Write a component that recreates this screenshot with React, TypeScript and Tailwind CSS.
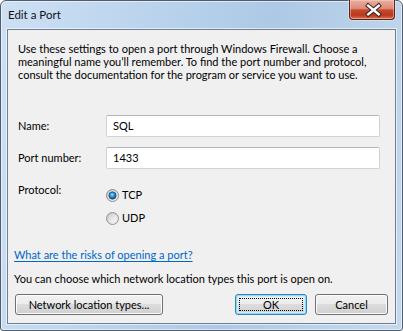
import React from "react";

function RadioOn() {
  return (
    <svg width="13" height="13" viewBox="0 0 13 13">
      <defs>
        <linearGradient id="rOnBg" x1="0" y1="0" x2="1" y2="1">
          <stop offset="0" stopColor="#c9c9c9" />
          <stop offset="1" stopColor="#f8f8f8" />
        </linearGradient>
        <radialGradient id="rOnDot" cx="0.45" cy="0.4" r="0.65">
          <stop offset="0" stopColor="#a6e4ff" />
          <stop offset="0.45" stopColor="#2b8fd6" />
          <stop offset="1" stopColor="#0c3a66" />
        </radialGradient>
      </defs>
      <circle cx="6.5" cy="6.5" r="6" fill="url(#rOnBg)" stroke="#8b8b8b" strokeWidth="1" />
      <circle cx="6.5" cy="6.5" r="3.7" fill="url(#rOnDot)" stroke="#1d4f7c" strokeWidth="0.6" />
    </svg>
  );
}

function RadioOff() {
  return (
    <svg width="13" height="13" viewBox="0 0 13 13">
      <defs>
        <linearGradient id="rOffBg" x1="0" y1="0" x2="1" y2="1">
          <stop offset="0" stopColor="#c4c4c4" />
          <stop offset="1" stopColor="#f6f6f6" />
        </linearGradient>
        <linearGradient id="rOffIn" x1="0" y1="0" x2="1" y2="1">
          <stop offset="0" stopColor="#d2d2d2" />
          <stop offset="1" stopColor="#fafafa" />
        </linearGradient>
      </defs>
      <circle cx="6.5" cy="6.5" r="6" fill="url(#rOffBg)" stroke="#929292" strokeWidth="1" />
      <circle cx="6.5" cy="6.5" r="4" fill="url(#rOffIn)" />
    </svg>
  );
}

function Btn({ children, w, def }: { children: React.ReactNode; w: string; def?: boolean }) {
  return (
    <div
      className={
        "relative flex h-[21px] items-center justify-center rounded-[3px] border bg-[linear-gradient(to_bottom,#f2f2f2_0%,#ebebeb_50%,#dddddd_50%,#cfcfcf_100%)] text-[11px] leading-[14px] text-black " +
        w +
        (def
          ? " border-[#3c7fb1] shadow-[inset_0_0_0_1px_#8fdcf8,inset_0_0_0_2px_#c8eefc]"
          : " border-[#707070] shadow-[inset_0_0_0_1px_#fcfcfc]")
      }
    >
      {def && <div className="pointer-events-none absolute inset-[3px] border border-dotted border-black" />}
      <span className="relative">{children}</span>
    </div>
  );
}

export default function App() {
  return (
    <div className="h-[331px] w-[403px] overflow-hidden bg-white font-['Lato','Open_Sans',sans-serif] text-[11px] text-black">
      <div className="flex h-full w-full flex-col rounded-t-[6px] rounded-b-[3px] border border-[#4f5d6e] bg-[linear-gradient(100deg,#cde0f5_0%,#b9d3ec_35%,#adc9e5_60%,#bcd3ea_85%,#c5d9ee_100%)] shadow-[inset_0_0_0_1px_rgba(255,255,255,0.55)]">
        {/* title bar */}
        <div className="flex h-[28px] shrink-0 items-start justify-between">
          <div className="pl-[7px] pt-[6px] text-[11.5px] leading-[16px] text-[#111]">Edit a Port</div>
          <div className="-mt-px mr-[7px] flex h-[20px] w-[46px] items-center justify-center rounded-b-[4px] border border-t-0 border-[#5a2318] bg-[linear-gradient(to_bottom,#eab0a2_0%,#dc8a76_45%,#c84a30_52%,#b9381e_80%,#d9744f_100%)] shadow-[inset_0_0_0_1px_rgba(255,220,210,0.45),0_0_0_1px_rgba(255,255,255,0.35)]">
            <svg width="46" height="20" viewBox="0 0 46 20">
              <path d="M19 5.5 L30 14.5 M30 5.5 L19 14.5" stroke="#3a2320" strokeWidth="4.6" strokeLinecap="square" />
              <path d="M19 5.5 L30 14.5 M30 5.5 L19 14.5" stroke="#ffffff" strokeWidth="2.6" strokeLinecap="square" />
            </svg>
          </div>
        </div>

        {/* content */}
        <div className="mx-[6px] mb-[6px] flex min-h-0 flex-1 flex-col border border-[#6f7e90] bg-[#f0f0f0] shadow-[0_0_0_1px_rgba(255,255,255,0.6)]">
          <p className="mt-[12px] whitespace-nowrap pl-[10px] leading-[13px]">
            Use these settings to open a port through Windows Firewall. Choose a
            <br />
            meaningful name you’ll remember. To find the port number and protocol,
            <br />
            consult the documentation for the program or service you want to use.
          </p>

          <div className="mt-[34px] flex items-center">
            <div className="w-[98px] pl-[10px]">Name:</div>
            <div className="flex h-[22px] w-[274px] items-center rounded-[2px] border border-[#cfd3da] border-t-[#b3b7bf] bg-white pl-[6px]">
              SQL
            </div>
          </div>

          <div className="mt-[10px] flex items-center">
            <div className="w-[98px] pl-[10px]">Port number:</div>
            <div className="flex h-[22px] w-[274px] items-center rounded-[2px] border border-[#cfd3da] border-t-[#b3b7bf] bg-white pl-[6px]">
              1433
            </div>
          </div>

          <div className="mt-[14px] flex items-start">
            <div className="w-[98px] pl-[10px] leading-[14px]">Protocol:</div>
            <div className="flex flex-col gap-[7px] pt-[4px]">
              <div className="flex h-[16px] items-center gap-[3px]">
                <RadioOn />
                <span>TCP</span>
              </div>
              <div className="flex h-[16px] items-center gap-[3px]">
                <RadioOff />
                <span>UDP</span>
              </div>
            </div>
          </div>

          <div className="mt-[22px] pl-[6px] leading-[14px]">
            <span className="text-[#0066cc] underline decoration-[#0066cc] underline-offset-[2px]">
              What are the risks of opening a port?
            </span>
          </div>

          <div className="mt-[10px] whitespace-nowrap pl-[6px] leading-[14px]">
            You can choose which network location types this port is open on.
          </div>

          <div className="mt-[8px] flex items-center px-[7px]">
            <Btn w="w-[148px]">Network location types...</Btn>
            <div className="ml-auto flex gap-[8px]">
              <Btn w="w-[72px]" def>
                OK
              </Btn>
              <Btn w="w-[73px]">Cancel</Btn>
            </div>
          </div>
        </div>
      </div>
    </div>
  );
}
